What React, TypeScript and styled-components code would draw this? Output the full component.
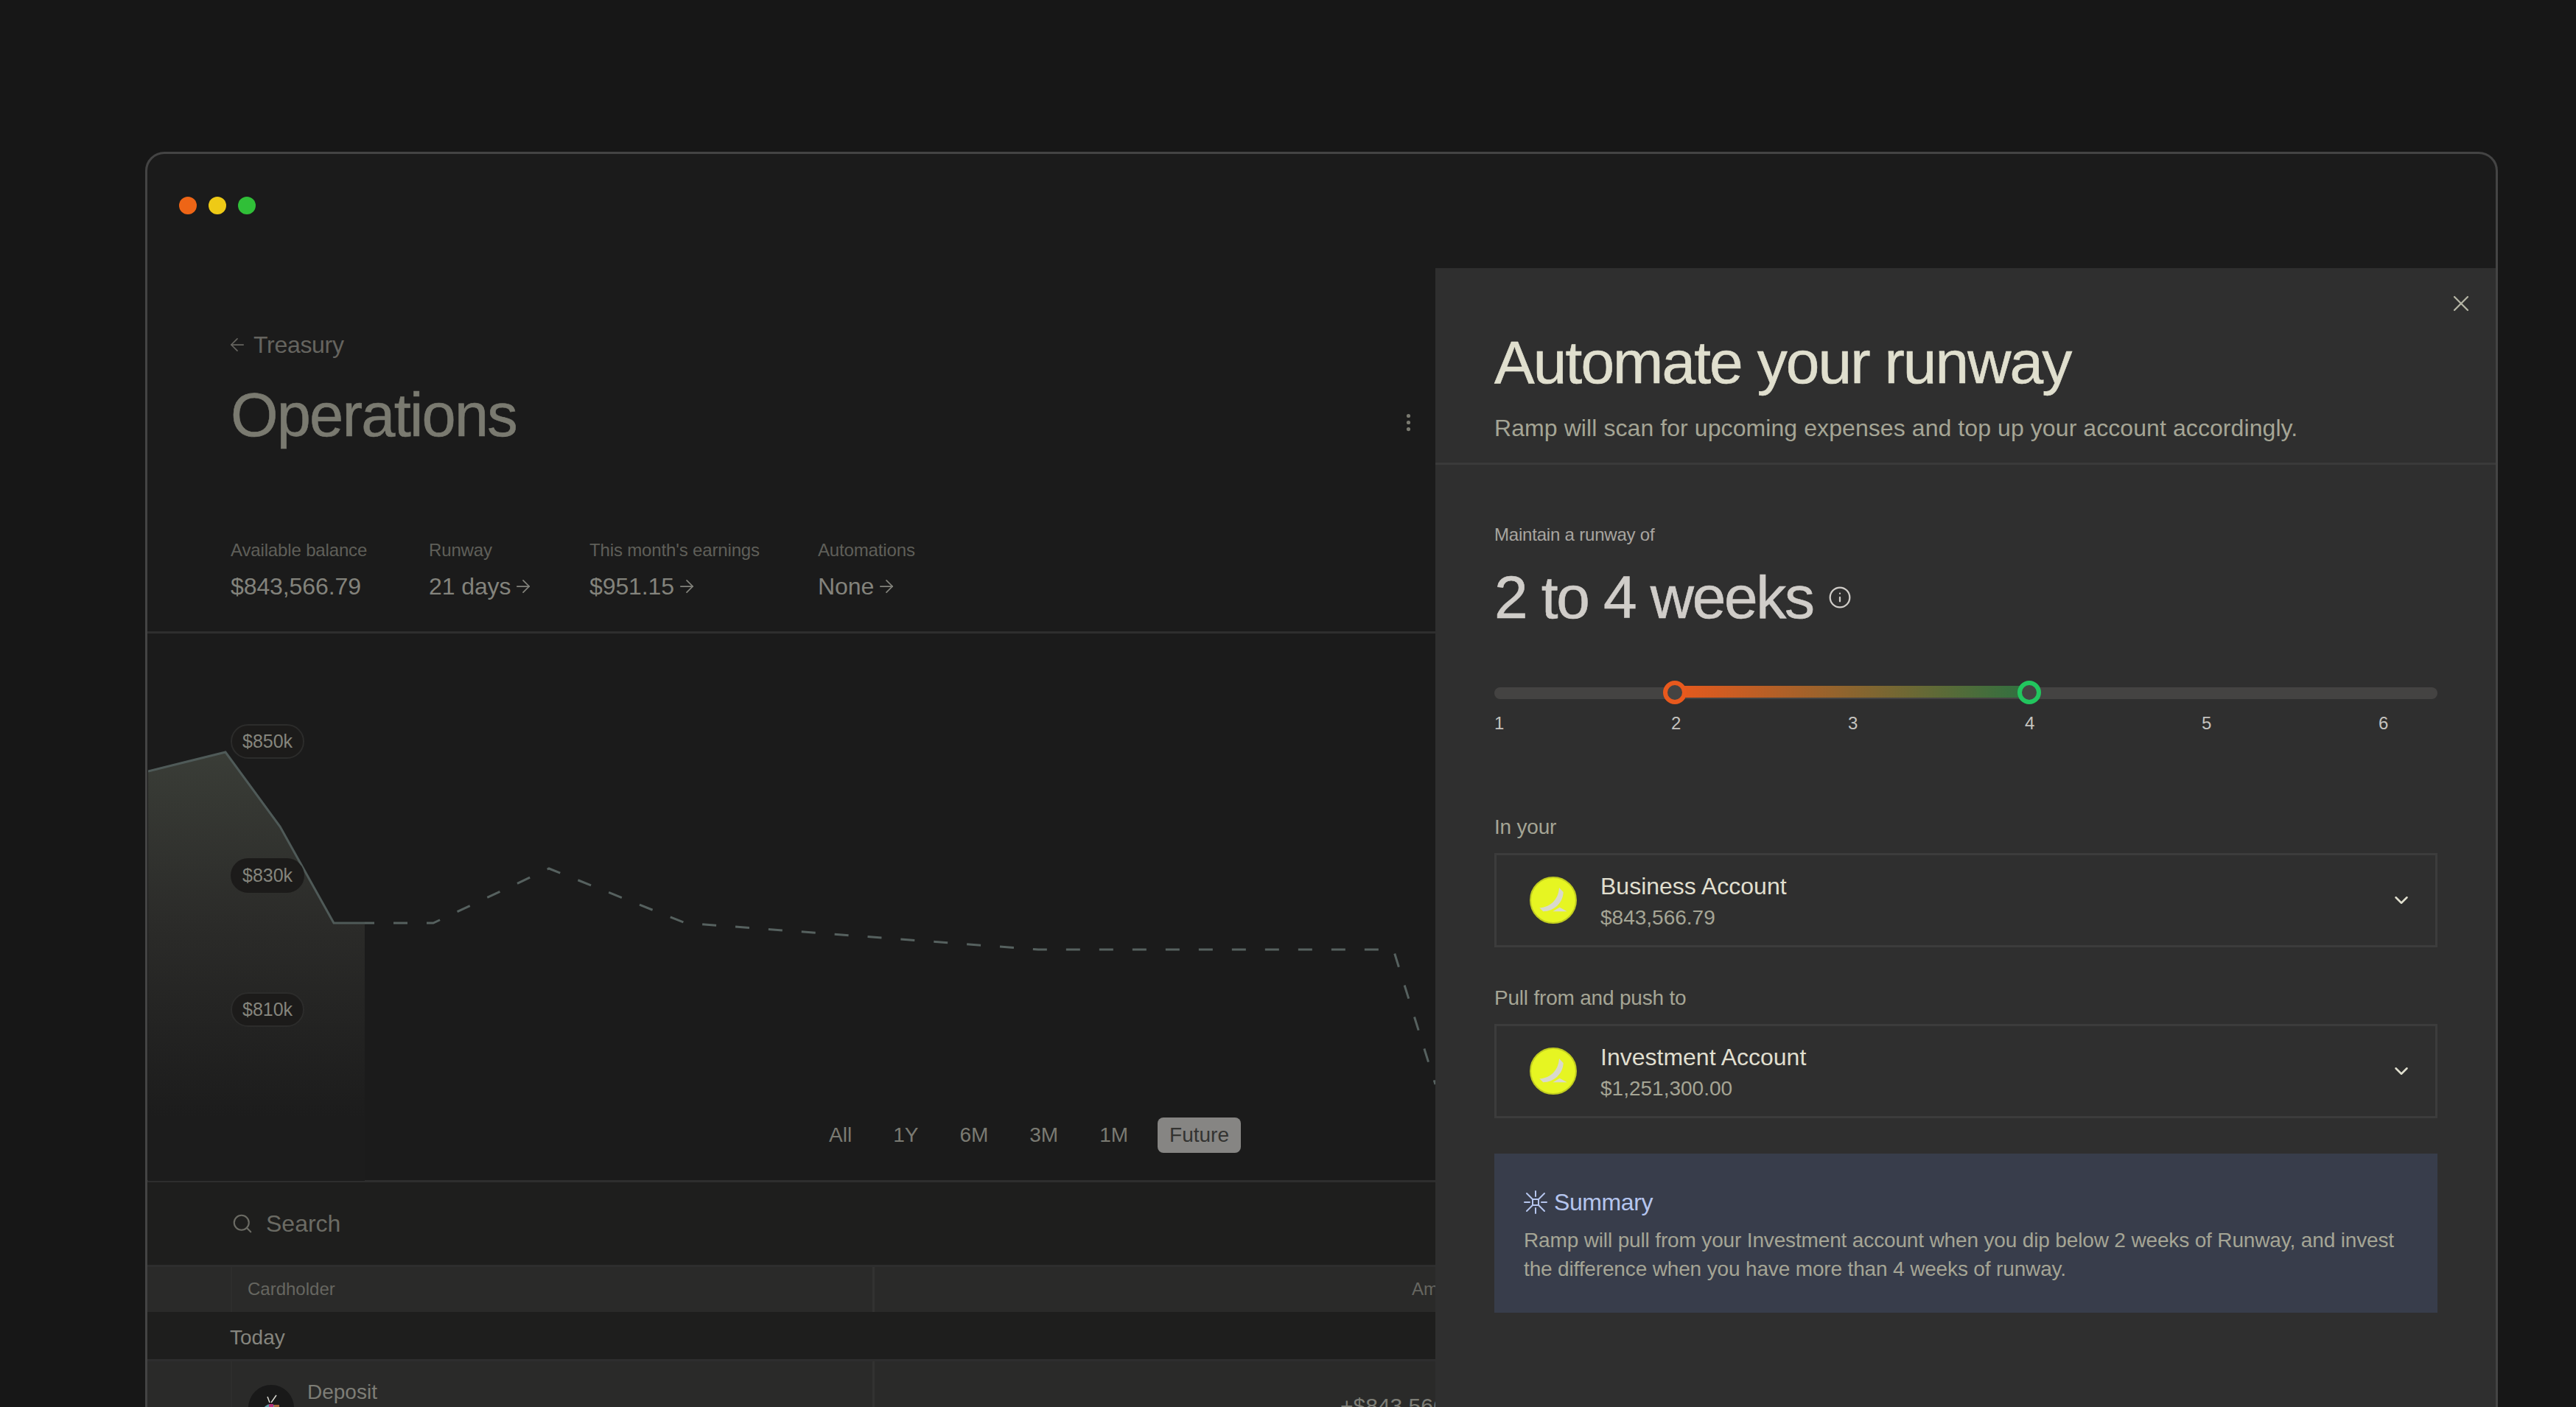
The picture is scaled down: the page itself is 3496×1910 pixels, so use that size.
import React from "react"
import styled, { createGlobalStyle } from "styled-components"
import { ArrowLeft, ArrowRight, ChevronDown, Info, MoreVertical, Search, X } from "lucide-react"

const GlobalStyle = createGlobalStyle`
    html, body {
        margin: 0;
        padding: 0;
        height: 1910px;
        overflow: hidden;
        background: #171717;
        font-family: "Liberation Sans", Arial, sans-serif;
    }
    * {
        box-sizing: border-box;
    }
`

const Page = styled.div`
    height: 1910px;
    padding: 206px 106px 0 197px;
    overflow: hidden;
`
const Window = styled.div`
    position: relative;
    height: 1780px;
    overflow: hidden;
    background: #1b1b1b;
    border: 3px solid #444444;
    border-radius: 26px;
`
const TitleBar = styled.div`
    display: flex;
    gap: 16px;
    height: 155px;
    padding: 58px 0 0 43px;
`
const Dot = styled.span<{ $color: string }>`
    width: 24px;
    height: 24px;
    border-radius: 50%;
    background: ${(p) => p.$color};
`

const Header = styled.div`
    padding: 86px 0 41px 113px;
    border-bottom: 3px solid #2e2e2e;
`
const Back = styled.div`
    display: flex;
    align-items: center;
    gap: 8px;
    height: 36px;
    margin-left: -5px;
    font-size: 32px;
    letter-spacing: -0.3px;
    color: #65645f;
`
const TitleRow = styled.div`
    display: flex;
    align-items: center;
    justify-content: space-between;
    width: 1614px;
    margin-top: 33px;
    color: #7a7a70;
`
const PageTitle = styled.h1`
    margin: 0;
    font-size: 83px;
    line-height: 90px;
    font-weight: 400;
    letter-spacing: -1.8px;
    color: #7a7a70;
    -webkit-text-stroke: 0.6px #7a7a70;
`
const Kebab = styled(MoreVertical)`
    margin-top: 18px;
`
const Stats = styled.div`
    display: flex;
    margin-top: 123px;
`
const Stat = styled.div<{ $width: number }>`
    width: ${(p) => p.$width}px;
`
const StatLabel = styled.div`
    font-size: 24px;
    line-height: 30px;
    letter-spacing: -0.15px;
    color: #5f5f59;
`
const StatValue = styled.div`
    display: flex;
    align-items: center;
    gap: 3px;
    margin-top: 14px;
    font-size: 32px;
    line-height: 40px;
    letter-spacing: -0.1px;
    color: #83837c;
`

const ChartArea = styled.div`
    position: relative;
    height: 745px;
    display: flex;
    align-items: flex-end;
    padding: 0 0 37px 909px;
    border-bottom: 3px solid #2e2e2e;
`
const ChartSvg = styled.svg`
    position: absolute;
    left: 1px;
    top: 0;
    width: 1747px;
    height: 743px;
`
const AxisPill = styled.div<{ $top: number; $bare?: boolean }>`
    position: absolute;
    left: 113px;
    top: ${(p) => p.$top}px;
    display: flex;
    align-items: center;
    height: 47px;
    padding: 0 14px;
    border-radius: 24px;
    font-size: 25px;
    color: #85857d;
    background: #1c1b1a;
    border: 2px solid ${(p) => (p.$bare ? "#1c1b1a" : "#2c2c2b")};
`
const Ranges = styled.div`
    position: relative;
    display: flex;
    gap: 24px;
`
const Range = styled.div<{ $active?: boolean }>`
    display: flex;
    align-items: center;
    height: 48px;
    padding: 0 16px;
    border-radius: 8px;
    font-size: 28px;
    color: ${(p) => (p.$active ? "#333331" : "#7a7a72")};
    background: ${(p) => (p.$active ? "#868583" : "transparent")};
`

const SearchRow = styled.div`
    display: flex;
    align-items: center;
    gap: 17px;
    height: 112px;
    padding-left: 114px;
    font-size: 32px;
    color: #6b6b64;
    background: #1e1e1d;
`
const TableRow = styled.div<{ $height: number }>`
    display: grid;
    grid-template-columns: 113px 871px 1fr;
    height: ${(p) => p.$height}px;
    background: #2a2a29;
    border-top: 3px solid #2e2e2e;
`
const Cell = styled.div<{ $line: number; $lineColor: string }>`
    display: flex;
    border-left: ${(p) => p.$line}px solid ${(p) => p.$lineColor};
`
const HeadCell = styled(Cell)`
    align-items: center;
    padding: 0 0 2px 21px;
    font-size: 24px;
    color: #666660;
`
const AmountHead = styled(HeadCell)`
    padding-left: 729px;
`
const DayRow = styled.div`
    display: flex;
    align-items: center;
    height: 64px;
    padding: 5px 0 0 112px;
    font-size: 28px;
    color: #85857e;
    background: #1e1e1d;
`
const DepositCell = styled(Cell)`
    gap: 18px;
    padding: 25px 0 0 22px;
    font-size: 28px;
    line-height: 34px;
    color: #7d7d76;
`
const Avatar = styled.svg`
    width: 62px;
    height: 62px;
    margin-top: 7px;
    flex-shrink: 0;
`
const AmountCell = styled(Cell)`
    padding: 44px 0 0 632px;
    font-size: 30px;
    color: #7d7d76;
`

const Panel = styled.aside`
    position: absolute;
    top: 155px;
    left: 1748px;
    right: -1px;
    bottom: 0;
    overflow: hidden;
    background: #2f2f2f;
`
const CloseButton = styled.div`
    position: absolute;
    top: 30px;
    right: 30px;
    display: flex;
    color: #b5b5a5;
`
const PanelHeader = styled.div`
    padding: 83px 80px 25px;
    border-bottom: 3px solid #3a3a3a;
`
const PanelTitle = styled.h2`
    margin: 0;
    font-size: 82px;
    line-height: 90px;
    font-weight: 400;
    letter-spacing: -1.9px;
    color: #e0dfce;
    -webkit-text-stroke: 0.6px #e0dfce;
`
const PanelSubtitle = styled.p`
    margin: 22px 0 0;
    font-size: 32px;
    line-height: 44px;
    letter-spacing: 0.08px;
    color: #a5a595;
`
const PanelBody = styled.div`
    padding: 80px 80px 0;
`
const SmallLabel = styled.div`
    font-size: 24px;
    line-height: 30px;
    letter-spacing: -0.2px;
    color: #a8a5a0;
`
const BigValue = styled.div`
    display: flex;
    align-items: center;
    gap: 20px;
    margin-top: 25px;
    font-size: 82px;
    line-height: 90px;
    letter-spacing: -2.3px;
    color: #d0cdc9;
    -webkit-text-stroke: 0.6px #d0cdc9;
`
const InfoIcon = styled(Info)`
    -webkit-text-stroke: 0;
`
const Slider = styled.div`
    position: relative;
    height: 32px;
    margin-top: 68px;
`
const Track = styled.div`
    position: absolute;
    top: 9px;
    left: 0;
    right: 0;
    height: 16px;
    border-radius: 8px;
    background: #444342;
`
const Fill = styled.div`
    position: absolute;
    top: 7px;
    left: 246px;
    width: 480px;
    height: 16px;
    background: linear-gradient(90deg, #e8591d, #2e7040);
`
const Handle = styled.div<{ $left: number; $color: string }>`
    position: absolute;
    top: 0;
    left: ${(p) => p.$left}px;
    width: 32px;
    height: 32px;
    border-radius: 50%;
    background: #444342;
    border: 6px solid ${(p) => p.$color};
`
const Ticks = styled.div`
    display: flex;
    margin-top: 11px;
`
const Tick = styled.span`
    flex: 0 0 240px;
    font-size: 24px;
    line-height: 30px;
    color: #c5c3bf;
`
const FieldLabel = styled.div<{ $top: number }>`
    margin-top: ${(p) => p.$top}px;
    font-size: 28px;
    line-height: 34px;
    letter-spacing: -0.2px;
    color: #a5a595;
`
const AccountBox = styled.div`
    display: flex;
    align-items: center;
    gap: 32px;
    height: 128px;
    margin-top: 18px;
    padding: 0 31px 0 45px;
    border: 3px solid #3c3c3c;
    color: #e0dfcf;
`
const AccountLogo = styled.svg`
    width: 64px;
    height: 64px;
    flex-shrink: 0;
`
const AccountText = styled.div`
    flex: 1;
    padding-top: 4px;
`
const AccountName = styled.div`
    font-size: 32px;
    line-height: 40px;
    color: #e0dfcf;
`
const AccountAmount = styled.div`
    margin-top: 4px;
    font-size: 28px;
    line-height: 38px;
    color: #a5a595;
`
const SummaryBox = styled.div`
    height: 216px;
    margin-top: 48px;
    padding: 46px 40px 0;
    background: #383d4b;
`
const SummaryHead = styled.div`
    display: flex;
    align-items: center;
    gap: 9px;
    font-size: 32px;
    line-height: 40px;
    letter-spacing: -0.4px;
    color: #b5c5ee;
`
const SummaryText = styled.p`
    margin: 12px 0 0;
    font-size: 28px;
    line-height: 39px;
    letter-spacing: -0.15px;
    color: #a5a595;
`

const solid = "M0 187 L105 161 L179 262 L252 393 L294 393"
const dashed = "M294 393 L387 393 L544 319 L729 393 L1208 429 L1690 429 L1747 612"

function ChartDrawing() {
    return (
        <ChartSvg viewBox="0 0 1747 743" fill="none">
            <defs>
                <linearGradient id="areaFade" x1="0" y1="0" x2="0" y2="1">
                    <stop offset="0" stopColor="#3a3d37" />
                    <stop offset="0.4" stopColor="#2b2b29" />
                    <stop offset="0.85" stopColor="#1c1c1c" />
                </linearGradient>
            </defs>
            <path d={`${solid} L294 743 L0 743 Z`} fill="url(#areaFade)" />
            <path d={solid} stroke="#4f5a58" strokeWidth="3" />
            <path d={dashed} stroke="#56615f" strokeWidth="3" strokeDasharray="19 26" strokeDashoffset="6" />
        </ChartSvg>
    )
}

function RampLogo() {
    return (
        <AccountLogo viewBox="0 0 64 64">
            <circle cx="32" cy="32" r="31" fill="#e6f522" stroke="#c0cc20" strokeWidth="2" />
            <path d="M13.3 42.3C27 42 39 32 40 15L45.7 21C45 36 33 47 18.3 47.3Z" fill="#d9d9cc" />
            <path d="M31.3 47.3L40.7 41.7L50.7 47.3Z" fill="#d9d9cc" />
        </AccountLogo>
    )
}

function SummaryIcon() {
    return (
        <svg width="32" height="32" viewBox="0 0 32 32" fill="none" stroke="#b5c5ee" strokeWidth="2" strokeLinecap="round">
            <rect x="12" y="12" width="8" height="8" />
            <path d="M16 1V8M16 24V31M1 16H8M24 16H31M12 12L4 4M20 12L28 4M12 20L4 28M20 20L28 28" />
        </svg>
    )
}

function Account({ name, amount }: { name: string; amount: string }) {
    return (
        <AccountBox>
            <RampLogo />
            <AccountText>
                <AccountName>{name}</AccountName>
                <AccountAmount>{amount}</AccountAmount>
            </AccountText>
            <ChevronDown size={30} strokeWidth={2} />
        </AccountBox>
    )
}

export default function App() {
    return (
        <Page>
            <GlobalStyle />
            <Window>
                <TitleBar>
                    <Dot $color="#ee6516" />
                    <Dot $color="#eeca16" />
                    <Dot $color="#30bf38" />
                </TitleBar>
                <Header>
                    <Back>
                        <ArrowLeft size={28} strokeWidth={1.5} />
                        Treasury
                    </Back>
                    <TitleRow>
                        <PageTitle>Operations</PageTitle>
                        <Kebab size={31} strokeWidth={2} />
                    </TitleRow>
                    <Stats>
                        <Stat $width={269}>
                            <StatLabel>Available balance</StatLabel>
                            <StatValue>$843,566.79</StatValue>
                        </Stat>
                        <Stat $width={218}>
                            <StatLabel>Runway</StatLabel>
                            <StatValue>21 days <ArrowRight size={28} strokeWidth={1.5} /></StatValue>
                        </Stat>
                        <Stat $width={310}>
                            <StatLabel>This month's earnings</StatLabel>
                            <StatValue>$951.15 <ArrowRight size={28} strokeWidth={1.5} /></StatValue>
                        </Stat>
                        <Stat $width={200}>
                            <StatLabel>Automations</StatLabel>
                            <StatValue>None <ArrowRight size={28} strokeWidth={1.5} /></StatValue>
                        </Stat>
                    </Stats>
                </Header>
                <ChartArea>
                    <ChartDrawing />
                    <AxisPill $top={123}>$850k</AxisPill>
                    <AxisPill $top={305} $bare>$830k</AxisPill>
                    <AxisPill $top={487}>$810k</AxisPill>
                    <Ranges>
                        <Range>All</Range>
                        <Range>1Y</Range>
                        <Range>6M</Range>
                        <Range>3M</Range>
                        <Range>1M</Range>
                        <Range $active>Future</Range>
                    </Ranges>
                </ChartArea>
                <SearchRow>
                    <Search size={30} strokeWidth={1.7} />
                    Search
                </SearchRow>
                <TableRow $height={64}>
                    <div />
                    <HeadCell $line={2} $lineColor="#2e2e2d">Cardholder</HeadCell>
                    <AmountHead $line={3} $lineColor="#323231">Amount</AmountHead>
                </TableRow>
                <DayRow>Today</DayRow>
                <TableRow $height={120}>
                    <div />
                    <DepositCell $line={2} $lineColor="#2e2e2d">
                        <Avatar viewBox="0 0 62 62">
                            <circle cx="31" cy="31" r="31" fill="#191919" />
                            <circle cx="30" cy="36" r="10" fill="#5d9aa5" />
                            <rect x="28" y="26" width="6" height="16" fill="#b52d78" />
                            <rect x="35" y="27" width="7" height="12" fill="#a8663a" />
                            <path d="M29 24L26 16M31 24L38 14" stroke="#d8d8d0" strokeWidth="1.5" />
                        </Avatar>
                        Deposit
                    </DepositCell>
                    <AmountCell $line={3} $lineColor="#323231">+$843,566.79</AmountCell>
                </TableRow>
                <Panel>
                    <CloseButton>
                        <X size={36} strokeWidth={1.5} />
                    </CloseButton>
                    <PanelHeader>
                        <PanelTitle>Automate your runway</PanelTitle>
                        <PanelSubtitle>Ramp will scan for upcoming expenses and top up your account accordingly.</PanelSubtitle>
                    </PanelHeader>
                    <PanelBody>
                        <SmallLabel>Maintain a runway of</SmallLabel>
                        <BigValue>
                            2 to 4 weeks
                            <InfoIcon size={32} strokeWidth={1.7} />
                        </BigValue>
                        <Slider>
                            <Track />
                            <Fill />
                            <Handle $left={229} $color="#e8591d" />
                            <Handle $left={710} $color="#22c55e" />
                        </Slider>
                        <Ticks>
                            {[1, 2, 3, 4, 5, 6].map((n) => (
                                <Tick key={n}>{n}</Tick>
                            ))}
                        </Ticks>
                        <FieldLabel $top={109}>In your</FieldLabel>
                        <Account name="Business Account" amount="$843,566.79" />
                        <FieldLabel $top={52}>Pull from and push to</FieldLabel>
                        <Account name="Investment Account" amount="$1,251,300.00" />
                        <SummaryBox>
                            <SummaryHead>
                                <SummaryIcon />
                                Summary
                            </SummaryHead>
                            <SummaryText>
                                Ramp will pull from your Investment account when you dip below 2 weeks of Runway, and invest the difference when you have more than 4 weeks of runway.
                            </SummaryText>
                        </SummaryBox>
                    </PanelBody>
                </Panel>
            </Window>
        </Page>
    )
}
